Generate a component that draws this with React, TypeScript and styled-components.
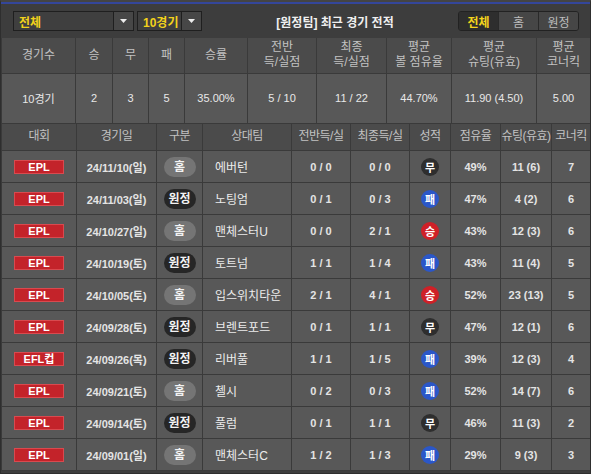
import React from 'react';
import styled, { createGlobalStyle } from 'styled-components';

const GlobalStyle = createGlobalStyle`
  html, body {
    margin: 0;
    padding: 0;
    background: #3c3c3c;
  }
  body {
    font-family: 'Liberation Sans', 'Noto Sans CJK KR', sans-serif;
  }
`;

const Wrap = styled.div`
  width: 591px;
  height: 474px;
  box-sizing: border-box;
  background: #3d3d3d;
  border: 1px solid #2e2e2e;
  border-top: 2px solid #444;
  overflow: hidden;
`;

const TopBar = styled.div`
  display: flex;
  align-items: center;
  height: 36px;
  box-sizing: border-box;
  border-top: 2px solid #34469a;
  padding: 0 11px 0 12px;
  gap: 3px;
`;

const Select = styled.div<{ $w: number }>`
  display: flex;
  width: ${(p) => p.$w}px;
  height: 20px;
  box-sizing: border-box;
  border: 1px solid #1f1f1f;
  background: #3f3f3f;
  .label {
    flex: 1;
    display: flex;
    align-items: center;
    padding-left: 5px;
    color: #f2d21b;
    font-size: 12px;
    font-weight: bold;
  }
  .arrow {
    width: 19px;
    display: flex;
    align-items: center;
    justify-content: center;
    border-left: 1px solid #1f1f1f;
    background: #474747;
  }
`;

const Title = styled.div`
  flex: 1;
  text-align: center;
  color: #f0f0f0;
  font-size: 12px;
  font-weight: bold;
  padding-left: 10px;
`;

const Toggle = styled.div`
  display: flex;
  height: 20px;
  box-sizing: border-box;
  border: 1px solid #222;
  border-radius: 3px;
  overflow: hidden;
`;

const ToggleBtn = styled.div<{ $on?: boolean }>`
  width: 39px;
  display: flex;
  align-items: center;
  justify-content: center;
  font-size: 12px;
  font-weight: ${(p) => (p.$on ? 'bold' : 'normal')};
  color: ${(p) => (p.$on ? '#f5d51c' : '#bdbdbd')};
  background: ${(p) => (p.$on ? '#2e2e2e' : '#464646')};
  & + & {
    border-left: 1px solid #2a2a2a;
  }
`;

const Table = styled.table`
  width: 589px;
  border-collapse: collapse;
  table-layout: fixed;
  td,
  th {
    border: 1px solid #3a3a3a;
    padding: 0;
    text-align: center;
    overflow: hidden;
    white-space: nowrap;
  }
  th {
    background: #4b4b4b;
    color: #c2c2c2;
    font-size: 12px;
    font-weight: normal;
    line-height: 15px;
  }
  td {
    background: #585858;
    color: #e4e4e4;
    font-size: 11px;
    font-weight: bold;
  }
  tr:first-child th {
    border-top: none;
  }
`;

const SumHead = styled.tr`
  height: 35px;
`;

const SumRow = styled.tr`
  height: 50px;
  td {
    font-weight: normal;
    color: #e8e8e8;
  }
`;

const ListHead = styled.tr`
  height: 27px;
  th {
    letter-spacing: -0.5px;
  }
`;

const Row = styled.tr`
  height: 32px;
`;

const League = styled.span`
  display: inline-block;
  width: 48px;
  height: 12px;
  line-height: 12px;
  background: #c3232a;
  border: 1px solid #d84a4f;
  color: #fff;
  font-size: 11px;
  font-weight: bold;
`;

const Venue = styled.span<{ $home: boolean }>`
  display: inline-block;
  width: 32px;
  height: 20px;
  line-height: 20px;
  border-radius: 10px;
  background: ${(p) => (p.$home ? '#757575' : '#262626')};
  color: #f2f2f2;
  font-size: 12px;
  font-weight: bold;
`;

const Team = styled.td`
  && {
    text-align: left;
    padding-left: 12px;
    font-size: 12px;
    font-weight: normal;
    color: #ececec;
  }
`;

const resultColor: Record<string, string> = {
  승: '#cf2027',
  무: '#2e2e2e',
  패: '#2b57c8',
};

const Result = styled.span<{ $r: string }>`
  display: inline-flex;
  align-items: center;
  justify-content: center;
  width: 18px;
  height: 18px;
  border-radius: 50%;
  background: ${(p) => resultColor[p.$r]};
  color: #fff;
  font-size: 11px;
  font-weight: bold;
`;

const sumCols = [74, 37, 36, 36, 63, 69, 70, 65, 85, 54];
const listCols = [75, 80, 46, 89, 59, 59, 41, 50, 51, 39];

const games = [
  ['EPL', '24/11/10(일)', '홈', '에버턴', '0 / 0', '0 / 0', '무', '49%', '11 (6)', '7'],
  ['EPL', '24/11/03(일)', '원정', '노팅엄', '0 / 1', '0 / 3', '패', '47%', '4 (2)', '6'],
  ['EPL', '24/10/27(일)', '홈', '맨체스터U', '0 / 0', '2 / 1', '승', '43%', '12 (3)', '6'],
  ['EPL', '24/10/19(토)', '원정', '토트넘', '1 / 1', '1 / 4', '패', '43%', '11 (4)', '5'],
  ['EPL', '24/10/05(토)', '홈', '입스위치타운', '2 / 1', '4 / 1', '승', '52%', '23 (13)', '5'],
  ['EPL', '24/09/28(토)', '원정', '브렌트포드', '0 / 1', '1 / 1', '무', '47%', '12 (1)', '6'],
  ['EFL컵', '24/09/26(목)', '원정', '리버풀', '1 / 1', '1 / 5', '패', '39%', '12 (3)', '4'],
  ['EPL', '24/09/21(토)', '홈', '첼시', '0 / 2', '0 / 3', '패', '52%', '14 (7)', '6'],
  ['EPL', '24/09/14(토)', '원정', '풀럼', '0 / 1', '1 / 1', '무', '46%', '11 (3)', '2'],
  ['EPL', '24/09/01(일)', '홈', '맨체스터C', '1 / 2', '1 / 3', '패', '29%', '9 (3)', '3'],
];

const Arrow = () => (
  <svg width="7" height="4" viewBox="0 0 7 4">
    <path d="M0 0h7L3.5 4z" fill="#eee" />
  </svg>
);

export default function App() {
  return (
    <Wrap>
      <GlobalStyle />
      <TopBar>
        <Select $w={121}>
          <div className="label">전체</div>
          <div className="arrow">
            <Arrow />
          </div>
        </Select>
        <Select $w={65}>
          <div className="label">10경기</div>
          <div className="arrow">
            <Arrow />
          </div>
        </Select>
        <Title>[원정팀] 최근 경기 전적</Title>
        <Toggle>
          <ToggleBtn $on>전체</ToggleBtn>
          <ToggleBtn>홈</ToggleBtn>
          <ToggleBtn>원정</ToggleBtn>
        </Toggle>
      </TopBar>

      <Table>
        <colgroup>
          {sumCols.map((w, i) => (
            <col key={i} style={{ width: w }} />
          ))}
        </colgroup>
        <tbody>
          <SumHead>
            <th>경기수</th>
            <th>승</th>
            <th>무</th>
            <th>패</th>
            <th>승률</th>
            <th>전반<br />득/실점</th>
            <th>최종<br />득/실점</th>
            <th>평균<br />볼 점유율</th>
            <th>평균<br />슈팅(유효)</th>
            <th>평균<br />코너킥</th>
          </SumHead>
          <SumRow>
            <td>10경기</td>
            <td>2</td>
            <td>3</td>
            <td>5</td>
            <td>35.00%</td>
            <td>5 / 10</td>
            <td>11 / 22</td>
            <td>44.70%</td>
            <td>11.90 (4.50)</td>
            <td>5.00</td>
          </SumRow>
        </tbody>
      </Table>

      <Table>
        <colgroup>
          {listCols.map((w, i) => (
            <col key={i} style={{ width: w }} />
          ))}
        </colgroup>
        <tbody>
          <ListHead>
            <th>대회</th>
            <th>경기일</th>
            <th>구분</th>
            <th>상대팀</th>
            <th>전반득/실</th>
            <th>최종득/실</th>
            <th>성적</th>
            <th>점유율</th>
            <th>슈팅(유효)</th>
            <th>코너킥</th>
          </ListHead>
          {games.map((g, i) => (
            <Row key={i}>
              <td>
                <League>{g[0]}</League>
              </td>
              <td>{g[1]}</td>
              <td>
                <Venue $home={g[2] === '홈'}>{g[2]}</Venue>
              </td>
              <Team>{g[3]}</Team>
              <td>{g[4]}</td>
              <td>{g[5]}</td>
              <td>
                <Result $r={g[6]}>{g[6]}</Result>
              </td>
              <td>{g[7]}</td>
              <td>{g[8]}</td>
              <td>{g[9]}</td>
            </Row>
          ))}
        </tbody>
      </Table>
    </Wrap>
  );
}
